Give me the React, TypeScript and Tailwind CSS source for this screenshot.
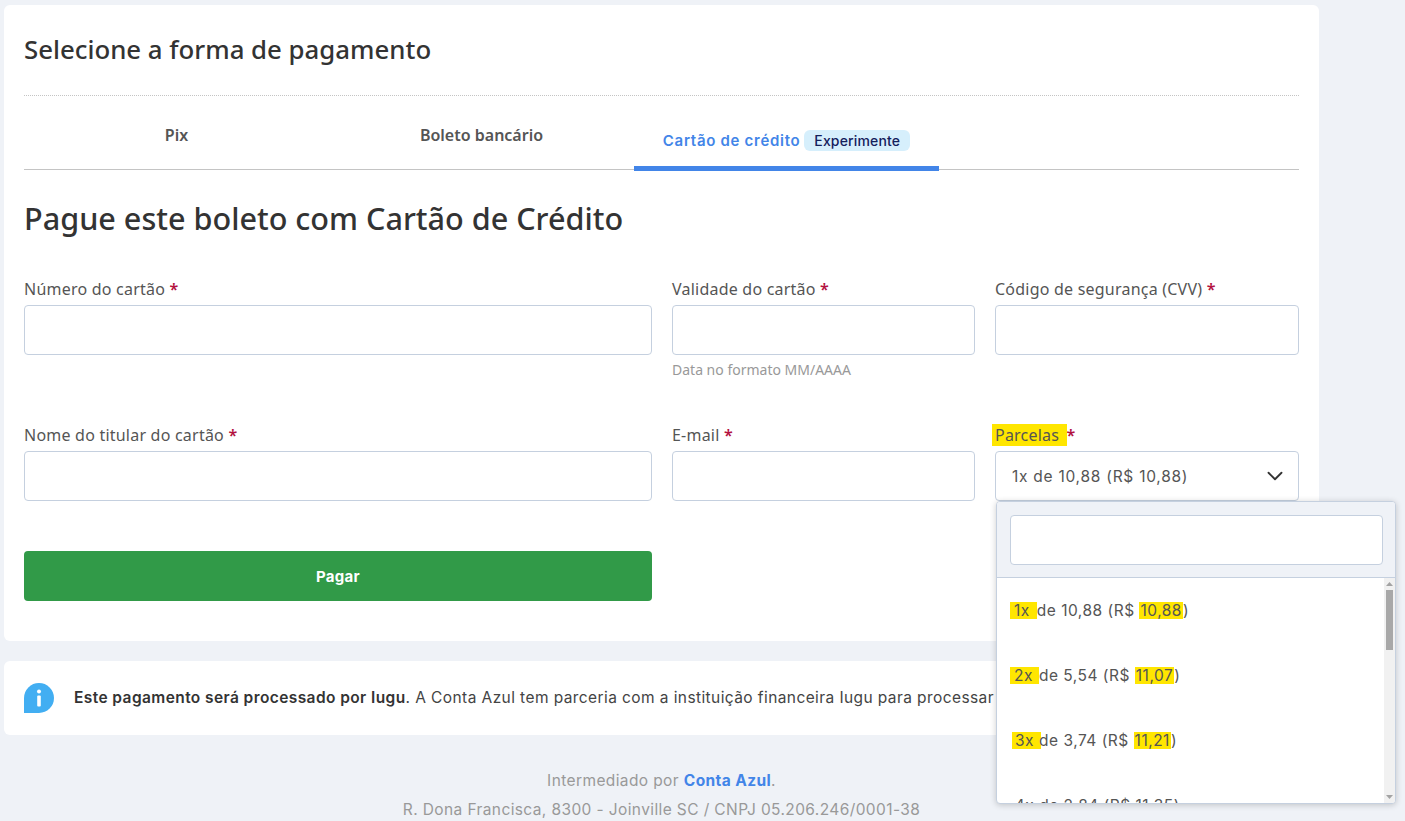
import { ChevronDown } from 'lucide-react';

const MONT = "font-['Inter','Liberation_Sans',sans-serif]";
const HUMAN = "font-['Noto_Sans','Liberation_Sans',sans-serif]";

function Field({ label, help, span }: { label: string; help?: string; span?: boolean }) {
  return (
    <div className={span ? 'col-span-2 h-[146px]' : 'h-[146px]'}>
      <label className={`block h-[27px] pt-[1px] text-[16px] leading-[20px] tracking-[0.22px] text-[#555] ${HUMAN}`}>
        {label} <span className="font-semibold text-[#b3123f]">*</span>
      </label>
      <input className="block h-[50px] w-full rounded-[4px] border border-[#c5d0df] bg-white" />
      {help && <p className={`mt-[7px] text-[14px] leading-[16px] text-[#999] ${HUMAN}`}>{help}</p>}
    </div>
  );
}

function Option({ a, rest, b, markClass }: { a: string; rest: string; b: string; markClass?: string }) {
  return (
    <div className={`flex h-[65px] shrink-0 items-center pl-[13px] text-[15.5px] tracking-[0.5px] text-[#555] whitespace-pre ${MONT}`}>
      {a && <mark className={`bg-[#ffe600] text-[#555] leading-[17px] ${markClass}`}>{a}</mark>}
      <span>{rest}</span>
      {b && <mark className="bg-[#ffe600] px-[1px] text-[#555] leading-[17px]">{b}</mark>}
      <span>)</span>
    </div>
  );
}

export default function App() {
  return (
    <div className="relative h-[821px] overflow-hidden bg-[#eff2f7] pl-[4px] pt-[5px]">
      <div className="w-[1315px] rounded-[6px] bg-white px-[20px] pb-[40px]">
        <h2 className={`flex h-[91px] items-center border-b border-dotted border-[#c4c4c4] pb-[2px] text-[25.8px] font-medium text-[#333] ${HUMAN}`}>
          Selecione a forma de pagamento
        </h2>
        <div className="relative flex h-[74px] border-b border-[#c4c4c4]">
          <div className={`flex w-[305px] justify-center pt-[27px] text-[16px] leading-[24px] font-semibold text-[#555] ${HUMAN}`}>Pix</div>
          <div className={`flex w-[305px] justify-center pt-[27px] text-[16px] leading-[24px] font-semibold text-[#555] ${HUMAN}`}>Boleto bancário</div>
          <div className="flex h-[75px] w-[305px] items-start justify-center gap-[4px] border-b-[5px] border-[#4285e8] pt-[34px]">
            <span className={`text-[15px] leading-[21px] tracking-[0.7px] font-semibold text-[#4285e8] ${MONT}`}>Cartão de crédito</span>
            <span className={`rounded-[6px] bg-[#d6effc] px-[10px] text-[14px] leading-[21px] tracking-[0.15px] font-medium text-[#14205c] ${MONT}`}>Experimente</span>
          </div>
        </div>
        <h1 className={`mt-[27px] h-[49px] text-[30.6px] leading-[43px] font-medium text-[#333] ${HUMAN}`}>
          Pague este boleto com Cartão de Crédito
        </h1>
        <div className="mt-[32px] grid grid-cols-[628px_303px_304px] gap-x-[20px]">
          <Field label="Número do cartão" />
          <Field label="Validade do cartão" help="Data no formato MM/AAAA" />
          <Field label="Código de segurança (CVV)" />
          <Field label="Nome do titular do cartão" />
          <Field label="E-mail" />
          <div className="h-[146px]">
            <label className={`block h-[27px] pt-[1px] text-[16px] leading-[20px] tracking-[0.22px] text-[#555] ${HUMAN}`}>
              <span className="-ml-[3px] bg-[#ffe600] pl-[3px] pr-[3px]">Parcelas </span><span className="font-semibold text-[#b3123f]">*</span>
            </label>
            <div className={`flex h-[50px] items-center justify-between rounded-[4px] border border-[#c5d0df] bg-white pl-[16px] pr-[10px] text-[15.5px] tracking-[0.74px] text-[#555] ${MONT}`}>
              <span className="pt-[1px]">1x de 10,88 (R$ 10,88)</span>
              <ChevronDown size={26} strokeWidth={1.7} className="text-[#333]" />
            </div>
          </div>
        </div>
        <button className={`-mt-[19px] block h-[50px] w-[628px] rounded-[4px] bg-[#319a48] pt-[2px] text-[15px] tracking-[0.3px] font-bold text-white ${MONT}`}>Pagar</button>
      </div>

      <div className={`mt-[20px] flex h-[74px] w-[1315px] items-center gap-[20px] overflow-hidden rounded-[6px] bg-white pl-[20px] text-[15.5px] tracking-[0.41px] whitespace-nowrap text-[#444] ${MONT}`}>
        <svg width="30" height="30" viewBox="0 0 30 30" className="shrink-0">
          <path d="M15 0a15 15 0 0 1 0 30H0V15A15 15 0 0 1 15 0z" fill="#42aef2" />
          <circle cx="15" cy="8.5" r="2" fill="#fff" />
          <rect x="13.2" y="12.5" width="3.6" height="11" rx="1" fill="#fff" />
        </svg>
        <p><b className="font-semibold text-[#333]">Este pagamento será processado por Iugu</b>. A Conta Azul tem parceria com a instituição financeira Iugu para processar seu pagamento.</p>
      </div>

      <div className={`w-[1315px] pt-[34px] text-center text-[15.5px] tracking-[0.39px] text-[#999] ${MONT}`}>
        <p className="h-[29px] leading-[24px]">Intermediado por <b className="font-bold text-[#4285e8]">Conta Azul</b>.</p>
        <p className="leading-[24px]">R. Dona Francisca, 8300 - Joinville SC / CNPJ 05.206.246/0001-38</p>
      </div>

      <div className="absolute left-[996px] top-[501px] flex h-[303px] w-[400px] flex-col overflow-hidden rounded-[4px] border border-[#c5d0df] bg-white shadow-[0_1px_6px_rgba(0,0,0,0.2)]">
        <div className="h-[76px] shrink-0 border-b border-[#c5d0df] bg-[#eff2f7] pl-[13px] pt-[13px]">
          <input className="block h-[50px] w-[373px] rounded-[4px] border border-[#c5d0df] bg-white" />
        </div>
        <div className="flex min-h-0 flex-1">
          <div className="min-w-0 flex-1 overflow-hidden">
            <Option a="1x" markClass="pl-[4px] pr-[7px]" rest="de 10,88 (R$ " b="10,88" />
            <Option a="2x" markClass="pl-[4px] pr-[6px]" rest="de 5,54 (R$ " b="11,07" />
            <Option a="3x" markClass="ml-[2px] pl-[3px] pr-[7px] -mr-[2px]" rest="de 3,74 (R$ " b="11,21" />
            <Option a="" rest=" 4x de 2,84 (R$ 11,35" b="" />
          </div>
          <div className="flex w-[11px] shrink-0 flex-col items-center justify-between bg-[#f1f1f1] py-[4px]">
            <div className="flex w-full flex-col items-center gap-[4px]">
              <svg width="7" height="4" viewBox="0 0 7 4"><path d="M3.5 0L7 4H0z" fill="#a3a3a3" /></svg>
              <div className="h-[60px] w-[7px] bg-[#a8a8a8]" />
            </div>
            <svg width="7" height="4" viewBox="0 0 7 4"><path d="M0 0h7L3.5 4z" fill="#a3a3a3" /></svg>
          </div>
        </div>
      </div>
    </div>
  );
}
